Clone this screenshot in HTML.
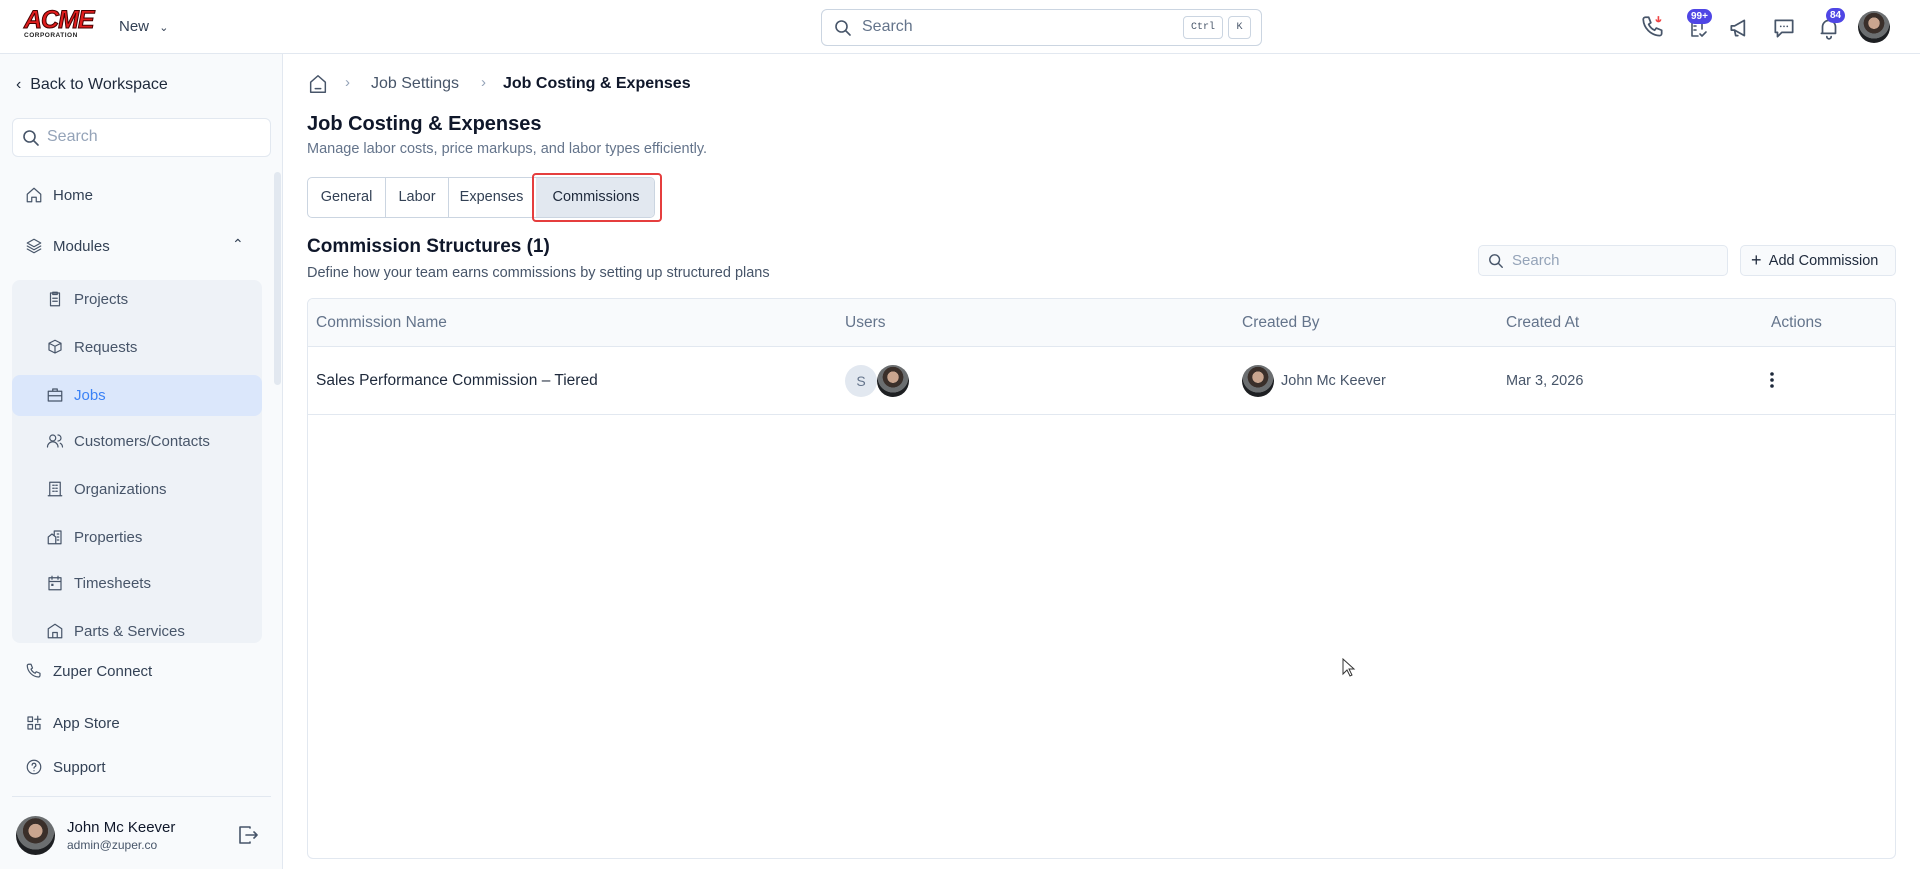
<!DOCTYPE html>
<html><head><meta charset="utf-8">
<style>
*{box-sizing:border-box;margin:0;padding:0}
body{width:1920px;height:869px;overflow:hidden;font-family:"Liberation Sans",sans-serif;background:#fff;color:#1e293b;position:relative}
.abs{position:absolute}
.hdr{left:0;top:0;width:1920px;height:54px;border-bottom:1px solid #e2e8f0;background:#fff}
.side{left:0;top:54px;width:283px;height:815px;background:#f8fafc;border-right:1px solid #e2e8f0}
.ico{stroke:#475569;fill:none;stroke-width:1.6;stroke-linecap:round;stroke-linejoin:round}
.nav{position:absolute;font-size:15px;color:#334155;display:flex;align-items:center;gap:10px}
.sub{position:absolute;left:46px;font-size:15px;color:#475569;display:flex;align-items:center;gap:10px}
.av{border-radius:50%;background:radial-gradient(circle at 50% 38%,#c9a58f 0 22%,#3a2f2a 23% 40%,#6b6e70 41% 60%,#1d1f22 61%)}
.badge{position:absolute;background:#4f46e5;color:#fff;font-size:10px;font-weight:bold;border-radius:9px;padding:1px 4px;line-height:13px}
.th{position:absolute;top:314px;font-size:15.5px;color:#64748b}
</style></head><body>
<div class="abs hdr">
  <div class="abs" style="left:24px;top:8px;width:72px;height:34px">
    <div style="font-family:'Liberation Sans';font-weight:900;font-size:25px;color:#e11d1d;letter-spacing:-1px;line-height:24px;font-style:italic;-webkit-text-stroke:1px #400">ACME</div>
    <div style="font-size:6.5px;font-weight:bold;letter-spacing:0.5px;color:#222">CORPORATION</div>
  </div>
  <div class="abs" style="left:119px;top:18px;font-size:15px;color:#334155">New <span style="font-size:11px;margin-left:6px">&#8964;</span></div>
  <div class="abs" style="left:821px;top:9px;width:441px;height:37px;border:1px solid #cbd5e1;border-radius:6px">
    <svg class="abs" style="left:12px;top:9px" width="18" height="18" viewBox="0 0 18 18"><circle cx="7.5" cy="7.5" r="5.5" class="ico" stroke="#64748b"/><path d="M12 12l4 4" class="ico"/></svg>
    <div class="abs" style="left:40px;top:8px;font-size:16px;color:#64748b">Search</div>
    <div class="abs" style="left:361px;top:6px;width:40px;height:23px;border:1px solid #cbd5e1;border-radius:4px;font-family:'Liberation Mono';font-size:10px;color:#475569;text-align:center;line-height:21px">Ctrl</div>
    <div class="abs" style="left:406px;top:6px;width:23px;height:23px;border:1px solid #cbd5e1;border-radius:4px;font-family:'Liberation Mono';font-size:10px;color:#475569;text-align:center;line-height:21px">K</div>
  </div>
  <svg class="abs" style="left:1640px;top:14px" width="26" height="26" viewBox="0 0 24 24"><path class="ico" d="M5 3h3l2 5-2 1.5a11 11 0 0 0 5.5 5.5L15 13l5 2v3a2 2 0 0 1-2 2A16 16 0 0 1 3 5a2 2 0 0 1 2-2z"/><path d="M17 2v5M15 5a2 2 0 0 0 4 0" stroke="#ef4444" fill="none" stroke-width="1.5"/></svg>
  <svg class="abs" style="left:1686px;top:16px" width="24" height="24" viewBox="0 0 24 24"><path class="ico" d="M6 4h10v9M6 4v16h6M8 10h2M8 14h2M14 18l2 2 4-4"/></svg>
  <div class="badge" style="left:1687px;top:9px">99+</div>
  <svg class="abs" style="left:1727px;top:15px" width="26" height="26" viewBox="0 0 24 24"><path class="ico" d="M4 10v4h3l9 5V5L7 10z M7 14l1 5h2"/></svg>
  <svg class="abs" style="left:1771px;top:15px" width="26" height="26" viewBox="0 0 24 24"><path class="ico" d="M4 5h16v11H10l-4 4v-4H4z"/><circle cx="9" cy="10.5" r=".8" fill="#475569"/><circle cx="12" cy="10.5" r=".8" fill="#475569"/><circle cx="15" cy="10.5" r=".8" fill="#475569"/></svg>
  <svg class="abs" style="left:1816px;top:15px" width="26" height="26" viewBox="0 0 24 24"><path class="ico" d="M6 17V11a6 6 0 0 1 12 0v6H5M10 20a2 2 0 0 0 4 0"/></svg>
  <div class="badge" style="left:1826px;top:8px">84</div>
  <div class="abs av" style="left:1858px;top:11px;width:32px;height:32px"></div>
</div>

<div class="abs side">
  <div class="abs" style="left:16px;top:22px;font-size:16px;color:#1e293b">&#8249;&nbsp; Back to Workspace</div>
  <div class="abs" style="left:12px;top:64px;width:259px;height:39px;background:#fff;border:1px solid #e2e8f0;border-radius:6px">
    <svg class="abs" style="left:9px;top:10px" width="18" height="18" viewBox="0 0 18 18"><circle cx="7.5" cy="7.5" r="5.5" class="ico" stroke="#94a3b8"/><path d="M12 12l4 4" class="ico" stroke="#94a3b8"/></svg>
    <div class="abs" style="left:34px;top:9px;font-size:16px;color:#94a3b8">Search</div>
  </div>
  <div class="nav" style="left:25px;top:132px"><svg width="18" height="18" viewBox="0 0 24 24"><path class="ico" d="M3 11l9-8 9 8v10h-6v-6H9v6H3z"/></svg>Home</div>
  <div class="nav" style="left:25px;top:183px"><svg width="18" height="18" viewBox="0 0 24 24"><path class="ico" d="M12 3l9 5-9 5-9-5z M3 12l9 5 9-5 M3 16l9 5 9-5"/></svg>Modules</div>
  <div class="abs" style="left:232px;top:182px;font-size:14px;color:#334155">&#8963;</div>
  <div class="abs" style="left:12px;top:226px;width:250px;height:363px;background:#eef2f7;border-radius:8px"></div>
  <div class="abs" style="left:274px;top:118px;width:7px;height:213px;background:#e2e8f0;border-radius:4px"></div>
  <div class="abs" style="left:12px;top:321px;width:250px;height:41px;background:#dbe7fb;border-radius:8px"></div>
  <div class="sub" style="top:236px"><svg width="18" height="18" viewBox="0 0 24 24"><path class="ico" d="M6 4h12v17H6z M9 3h6v3H9z M9 11h6M9 15h6"/></svg>Projects</div>
  <div class="sub" style="top:284px"><svg width="18" height="18" viewBox="0 0 24 24"><path class="ico" d="M12 3l8 4v9l-8 4-8-4V7z M4 7l8 4 8-4M12 11v9"/></svg>Requests</div>
  <div class="sub" style="top:332px;color:#3b82f6"><svg width="18" height="18" viewBox="0 0 24 24"><path class="ico" stroke="#3b82f6" d="M3 7h18v13H3z M9 7V4h6v3 M3 13h18"/></svg>Jobs</div>
  <div class="sub" style="top:378px"><svg width="18" height="18" viewBox="0 0 24 24"><circle cx="9" cy="8" r="4" class="ico"/><path class="ico" d="M2 20a7 7 0 0 1 14 0 M16 4a4 4 0 0 1 0 8 M19 15a6 6 0 0 1 3 5"/></svg>Customers/Contacts</div>
  <div class="sub" style="top:426px"><svg width="18" height="18" viewBox="0 0 24 24"><path class="ico" d="M5 3h14v18H5z M9 7h2M13 7h2M9 11h2M13 11h2M9 15h2M13 15h2M3 21h18"/></svg>Organizations</div>
  <div class="sub" style="top:474px"><svg width="18" height="18" viewBox="0 0 24 24"><path class="ico" d="M3 21V12l5-4 5 4v9z M11 10V4h9v17h-7M15 8h2M15 12h2M15 16h2"/></svg>Properties</div>
  <div class="sub" style="top:520px"><svg width="18" height="18" viewBox="0 0 24 24"><path class="ico" d="M4 5h16v16H4z M4 10h16M8 3v4M16 3v4"/><rect x="7" y="13" width="3" height="3" fill="#475569"/></svg>Timesheets</div>
  <div class="sub" style="top:568px"><svg width="18" height="18" viewBox="0 0 24 24"><path class="ico" d="M3 21V9l9-6 9 6v12z M9 21v-7h6v7"/></svg>Parts &amp; Services</div>
  <div class="nav" style="left:25px;top:608px"><svg width="18" height="18" viewBox="0 0 24 24"><path class="ico" d="M5 3h3l2 5-2 1.5a11 11 0 0 0 5.5 5.5L15 13l5 2v3a2 2 0 0 1-2 2A16 16 0 0 1 3 5a2 2 0 0 1 2-2z"/></svg>Zuper Connect</div>
  <div class="nav" style="left:25px;top:660px"><svg width="18" height="18" viewBox="0 0 24 24"><path class="ico" d="M4 4h6v6H4z M4 14h6v6H4z M14 14h6v6h-6z M17 3v8M13 7h8"/></svg>App Store</div>
  <div class="nav" style="left:25px;top:704px"><svg width="18" height="18" viewBox="0 0 24 24"><circle cx="12" cy="12" r="9" class="ico"/><path class="ico" d="M9.5 9.5a2.5 2.5 0 1 1 3.5 2.3c-.7.4-1 1-1 1.7 M12 17h.01"/></svg>Support</div>
  <div class="abs" style="left:12px;top:742px;width:259px;height:1px;background:#e2e8f0"></div>
  <div class="abs av" style="left:16px;top:762px;width:39px;height:39px"></div>
  <div class="abs" style="left:67px;top:765px;font-size:15px;color:#0f172a">John Mc Keever</div>
  <div class="abs" style="left:67px;top:784px;font-size:12px;color:#475569">admin@zuper.co</div>
  <svg class="abs" style="left:236px;top:769px" width="24" height="24" viewBox="0 0 24 24"><path class="ico" stroke="#64748b" d="M14 5V4H4v16h10v-1 M10 12h11M18 9l3 3-3 3"/></svg>
</div>

<!-- main -->
<svg class="abs" style="left:307px;top:73px" width="22" height="22" viewBox="0 0 24 24"><path class="ico" d="M4 10l8-7 8 7v11H4z M9 17h6"/></svg>
<div class="abs" style="left:345px;top:74px;font-size:15px;color:#94a3b8">&#8250;</div>
<div class="abs" style="left:371px;top:75px;font-size:16px;color:#475569">Job Settings</div>
<div class="abs" style="left:481px;top:74px;font-size:15px;color:#94a3b8">&#8250;</div>
<div class="abs" style="left:503px;top:75px;font-size:16px;color:#0f172a;font-weight:bold">Job Costing &amp; Expenses</div>
<div class="abs" style="left:307px;top:113px;font-size:20px;font-weight:bold;color:#0f172a">Job Costing &amp; Expenses</div>
<div class="abs" style="left:307px;top:141px;font-size:14.5px;color:#64748b">Manage labor costs, price markups, and labor types efficiently.</div>
<div class="abs" style="left:307px;top:177px;width:348px;height:41px;border:1px solid #cbd5e1;border-radius:5px;overflow:hidden;font-size:14.5px;color:#334155">
  <div class="abs" style="left:0;top:0;width:78px;height:41px;border-right:1px solid #cbd5e1;text-align:center;line-height:39px">General</div>
  <div class="abs" style="left:78px;top:0;width:63px;height:41px;border-right:1px solid #cbd5e1;text-align:center;line-height:39px">Labor</div>
  <div class="abs" style="left:141px;top:0;width:85px;height:41px;text-align:center;line-height:39px">Expenses</div>
  <div class="abs" style="left:228px;top:0;width:120px;height:41px;background:#e2e8f0;text-align:center;line-height:39px;color:#1e293b">Commissions</div>
</div>
<div class="abs" style="left:532px;top:173px;width:130px;height:49px;border:2.5px solid #e53e3e;border-radius:4px"></div>
<div class="abs" style="left:307px;top:236px;font-size:19px;font-weight:bold;color:#0f172a">Commission Structures (1)</div>
<div class="abs" style="left:307px;top:265px;font-size:14.5px;color:#475569">Define how your team earns commissions by setting up structured plans</div>
<div class="abs" style="left:1478px;top:245px;width:250px;height:31px;border:1px solid #e2e8f0;border-radius:5px;background:#f8fafc">
  <svg class="abs" style="left:9px;top:7px" width="16" height="16" viewBox="0 0 18 18"><circle cx="7.5" cy="7.5" r="5.5" class="ico" stroke="#94a3b8"/><path d="M12 12l4 4" class="ico" stroke="#94a3b8"/></svg>
  <div class="abs" style="left:33px;top:6px;font-size:15px;color:#94a3b8">Search</div>
</div>
<div class="abs" style="left:1740px;top:245px;width:156px;height:31px;border:1px solid #e2e8f0;border-radius:5px;background:#f8fafc;font-size:14.5px;color:#1e293b;line-height:29px;padding-left:10px"><span style="font-size:18px;vertical-align:-1px">+</span>&nbsp; Add Commission</div>

<div class="abs" style="left:307px;top:298px;width:1589px;height:561px;border:1px solid #e2e8f0;border-radius:6px;overflow:hidden">
  <div class="abs" style="left:0;top:0;width:100%;height:48px;background:#f8fafc;border-bottom:1px solid #e2e8f0"></div>
  <div class="abs" style="left:0;top:115px;width:100%;height:1px;background:#e2e8f0"></div>
</div>
<div class="th" style="left:316px">Commission Name</div>
<div class="th" style="left:845px">Users</div>
<div class="th" style="left:1242px">Created By</div>
<div class="th" style="left:1506px">Created At</div>
<div class="th" style="left:1771px">Actions</div>
<div class="abs" style="left:316px;top:372px;font-size:15.5px;color:#1e293b">Sales Performance Commission – Tiered</div>
<div class="abs" style="left:845px;top:365px;width:32px;height:32px;border-radius:50%;background:#e2e8f0;color:#64748b;font-size:14px;text-align:center;line-height:32px">S</div>
<div class="abs av" style="left:877px;top:365px;width:32px;height:32px"></div>
<div class="abs av" style="left:1242px;top:365px;width:32px;height:32px"></div>
<div class="abs" style="left:1281px;top:373px;font-size:14.5px;color:#475569">John Mc Keever</div>
<div class="abs" style="left:1506px;top:373px;font-size:14.5px;color:#475569">Mar 3, 2026</div>
<svg class="abs" style="left:1766px;top:370px" width="12" height="20" viewBox="0 0 12 20"><circle cx="6" cy="4" r="1.8" fill="#1e293b"/><circle cx="6" cy="10" r="1.8" fill="#1e293b"/><circle cx="6" cy="16" r="1.8" fill="#1e293b"/></svg>
<svg class="abs" style="left:1342px;top:658px" width="14" height="20" viewBox="0 0 14 20"><path d="M1 1v15l4-4 3 6 2-1-3-6h5z" fill="#fff" stroke="#333" stroke-width="1"/></svg>
</body></html>
